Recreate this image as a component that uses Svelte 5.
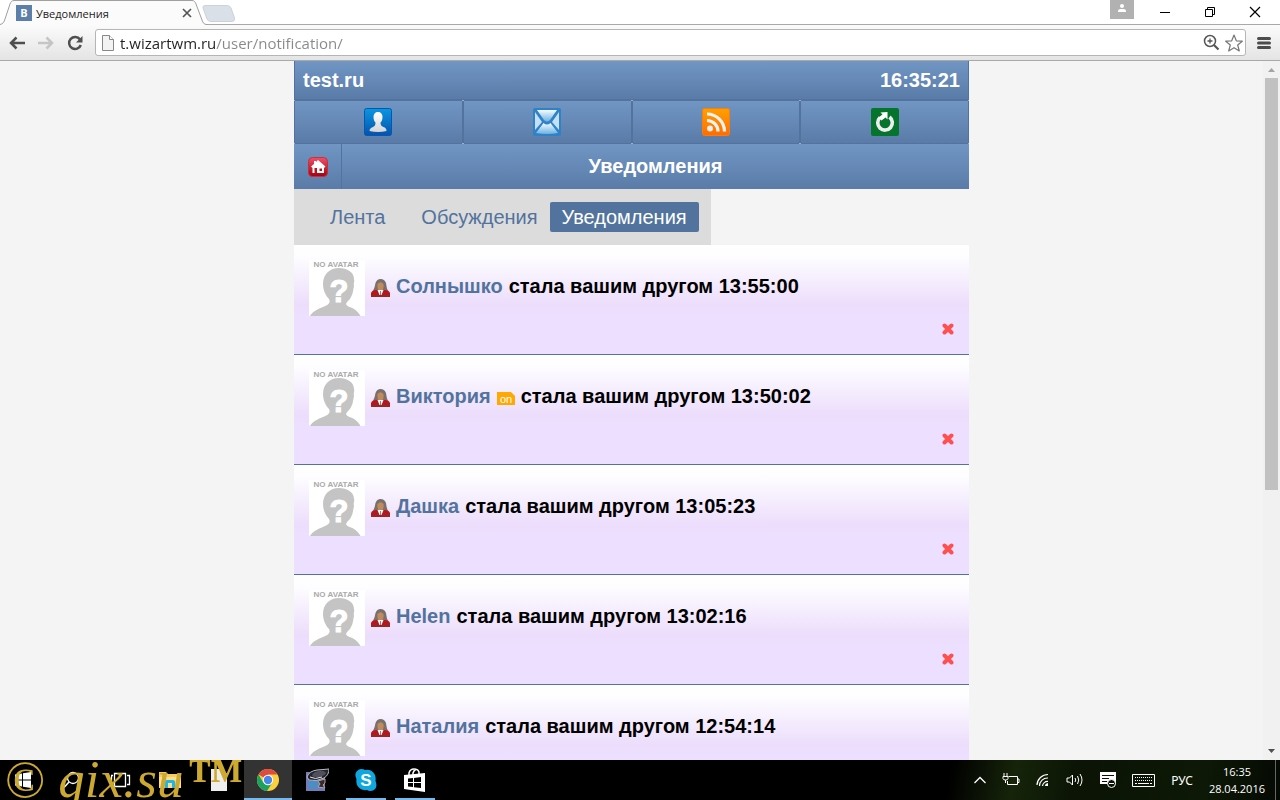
<script lang="ts">
  type Notice = { name: string; online: boolean; time: string };

  const notices: Notice[] = [
    { name: "Солнышко", online: false, time: "13:55:00" },
    { name: "Виктория", online: true, time: "13:50:02" },
    { name: "Дашка", online: false, time: "13:05:23" },
    { name: "Helen", online: false, time: "13:02:16" },
    { name: "Наталия", online: false, time: "12:54:14" },
  ];

  let address: string = $state("t.wizartwm.ru/user/notification/");
</script>

<svelte:head>
  <title>Уведомления</title>
</svelte:head>

<div class="screen">
  <header class="tabstrip">
    <div class="tab">
      <svg class="tab-shape" width="208" height="26" viewBox="0 0 208 26">
        <path
          d="M0 24.5C3 24 4 22 5 19L10 4C11 1.500 12 .5 14 .5H192C194 .5 195 1.500 196 4L202 20C203 23 204 24.500 207 24.500H208V26H0Z"
          fill="#fbfbfb"
        />
        <path
          d="M0 24.5C3 24 4 22 5 19L10 4C11 1.500 12 .5 14 .5H192C194 .5 195 1.500 196 4L202 20C203 23 204 24.500 207 24.500H208"
          fill="none"
          stroke="#a0a0a0"
        />
      </svg>
      <span class="favicon">B</span>
      <span class="tab-title">Уведомления</span>
      <button class="tab-close" aria-label="Закрыть вкладку">
        <svg width="10" height="10" viewBox="0 0 10 10">
          <path d="M1 1L9 9M9 1L1 9" stroke="#555" stroke-width="1.700" />
        </svg>
      </button>
    </div>
    <button class="new-tab" aria-label="Новая вкладка">
      <svg width="34" height="17" viewBox="0 0 34 17">
        <path
          d="M3 .5H25Q28 .5 29 3L32.500 13Q33 16.500 30 16.500H9Q6 16.500 5 14L1 3Q.5 .5 3 .5Z"
          fill="#dae0e8"
          stroke="#cdd2d9"
        />
      </svg>
    </button>
    <div class="window-buttons">
      <button class="profile" aria-label="Профиль">
        <svg width="24" height="19" viewBox="0 0 24 19">
          <circle cx="12" cy="6" r="2" fill="#fff" />
          <path d="M8 12V11Q8 9 10.500 9H13.500Q16 9 16 11V12Z" fill="#fff" />
        </svg>
      </button>
      <button aria-label="Свернуть">
        <svg width="12" height="12" viewBox="0 0 12 12">
          <path d="M1 6.500H11" stroke="#000" />
        </svg>
      </button>
      <button aria-label="Восстановить">
        <svg width="12" height="12" viewBox="0 0 12 12">
          <path d="M1.500 3.500H8.500V10.500H1.500ZM3.500 3.500V1.500H10.500V8.500H8.500" fill="none" stroke="#000" />
        </svg>
      </button>
      <button aria-label="Закрыть">
        <svg width="12" height="12" viewBox="0 0 12 12">
          <path d="M1 1L11 11M11 1L1 11" stroke="#000" stroke-width="1.200" />
        </svg>
      </button>
    </div>
  </header>

  <div class="toolbar">
    <button class="nav" aria-label="Назад">
      <svg width="18" height="18" viewBox="0 0 18 18">
        <path d="M17 9H3M8.500 3.500L3 9L8.500 14.500" fill="none" stroke="#4f4f4f" stroke-width="2.500" />
      </svg>
    </button>
    <button class="nav" aria-label="Вперёд">
      <svg width="18" height="18" viewBox="0 0 18 18">
        <path d="M1 9H15M9.500 3.500L15 9L9.500 14.500" fill="none" stroke="#c5c5c5" stroke-width="2.500" />
      </svg>
    </button>
    <button class="nav" aria-label="Обновить">
      <svg width="18" height="18" viewBox="0 0 18 18">
        <path d="M14 5.500A6 6 0 1 0 14.800 11" fill="none" stroke="#4f4f4f" stroke-width="2.500" />
        <path d="M16.500 2V8.500H10Z" fill="#4f4f4f" />
      </svg>
    </button>
    <div class="omnibox">
      <svg width="12" height="16" viewBox="0 0 12 16">
        <path d="M.5 .5H7.500L11.500 4.500V15.500H.5Z" fill="#f3f3f3" stroke="#888" />
        <path d="M7.500 .5V4.500H11.500" fill="#fff" stroke="#888" />
      </svg>
      <input class="address" type="text" aria-label="Адрес" bind:value={address} />
      <svg width="18" height="18" viewBox="0 0 18 18">
        <circle cx="7" cy="7" r="5.500" fill="none" stroke="#555" stroke-width="1.500" />
        <path d="M4.500 7H9.500M7 4.500V9.500" stroke="#555" stroke-width="1.300" />
        <path d="M11 11L15.500 15.500" stroke="#555" stroke-width="2.200" />
      </svg>
      <svg width="18" height="18" viewBox="0 0 18 18">
        <path
          d="M9 1L11.300 6.800L17.300 7.200L12.700 11L14.300 17L9 13.700L3.700 17L5.300 11L.7 7.200L6.700 6.800Z"
          fill="#fff"
          stroke="#777"
          stroke-width="1.200"
          stroke-linejoin="round"
        />
      </svg>
    </div>
    <button class="menu" aria-label="Меню">
      <svg width="14" height="14" viewBox="0 0 14 14">
        <path d="M1.500 2.500H12.500M1.500 7H12.500M1.500 11.500H12.500" stroke="#4c4c4c" stroke-width="3" stroke-linecap="round" />
      </svg>
    </button>
  </div>

  <div class="viewport">
    <main class="page">
      <div class="site-head">
        <a href="/">test.ru</a>
        <span>16:35:21</span>
      </div>

      <nav class="main-menu">
        <a href="/user/" aria-label="Профиль">
          <svg width="28" height="28" viewBox="0 0 28 28">
            <defs>
              <linearGradient id="blue" x2="0" y2="1">
                <stop stop-color="#0a97e0" />
                <stop offset="1" stop-color="#0552ae" />
              </linearGradient>
              <linearGradient id="silver" x2="0" y2="1">
                <stop stop-color="#fff" />
                <stop offset="1" stop-color="#d5d5d5" />
              </linearGradient>
            </defs>
            <rect x=".5" y=".5" width="27" height="27" rx="2" fill="url(#blue)" stroke="#0558ae" />
            <path
              d="M14 4C17 4 18.500 6 18.500 9C18.500 12 17.500 13.500 16.500 14.500C16.500 17 17 18 19.500 19C22 20 22.500 21 22.500 23Q14 25 5.500 23C5.500 21 6.500 20 9 19C11 18 11.500 17 11.500 14.500C10.500 13.500 9.500 12 9.500 9C9.500 6 11 4 14 4Z"
              fill="url(#silver)"
            />
          </svg>
        </a>
        <a href="/mail/" aria-label="Почта">
          <svg width="28" height="28" viewBox="0 0 28 28">
            <defs>
              <linearGradient id="mail" x2="0" y2="1">
                <stop stop-color="#f5fbff" />
                <stop offset="1" stop-color="#6bb3e4" />
              </linearGradient>
            </defs>
            <rect width="28" height="28" rx="2" fill="#3181c7" />
            <path d="M4 2H24L17 12Q14 15 11 12Z" fill="url(#mail)" />
            <path d="M2 4L9 14L2 22ZM26 4L19 14L26 22Z" fill="#c2e1f5" />
            <path d="M3 25L10.500 15Q14 18 17.500 15L25 25Q14 27 3 25Z" fill="url(#mail)" />
          </svg>
        </a>
        <a href="/feed/" aria-label="Лента">
          <svg width="28" height="28" viewBox="0 0 28 28">
            <defs>
              <linearGradient id="orange" x2="0" y2="1">
                <stop stop-color="#ffa100" />
                <stop offset="1" stop-color="#ff6c00" />
              </linearGradient>
            </defs>
            <rect x=".5" y=".5" width="27" height="27" rx="2" fill="url(#orange)" stroke="#ff7b0b" />
            <circle cx="8" cy="20.500" r="3" fill="#eee" />
            <path d="M5 12.500A11 11 0 0 1 16 23.500M5 6A17.500 17.500 0 0 1 22.500 23.500" fill="none" stroke="#f3f3f3" stroke-width="3.200" />
          </svg>
        </a>
        <a href="/user/notification/" aria-label="Обновить">
          <svg width="28" height="28" viewBox="0 0 28 28">
            <rect width="28" height="28" rx="2" fill="#05742c" />
            <path d="M9 9.500A7.300 7.300 0 1 0 18.500 9" fill="none" stroke="#eee" stroke-width="3.600" />
            <path d="M9.500 4.500L16.500 4V11.500L14.500 9.500L10.500 12.500L7.500 9.500L11.500 6.500Z" fill="#fff" />
          </svg>
        </a>
      </nav>

      <div class="title-bar">
        <a class="home" href="/" aria-label="Главная">
          <svg width="20" height="20" viewBox="0 0 20 20">
            <defs>
              <linearGradient id="red" x2="0" y2="1">
                <stop stop-color="#f0506a" />
                <stop offset="1" stop-color="#a4000c" />
              </linearGradient>
            </defs>
            <rect x=".5" y=".5" width="19" height="19" rx="4" fill="url(#red)" stroke="#c4303c" />
            <path d="M10 3L17.500 9.500L16 11V16H4.500V11L3 9.500L6 7V4H8V5Z" fill="#fff" />
            <path d="M6.500 11H9V16H6.500ZM11.500 11.500H14V14H11.500Z" fill="#b51420" />
          </svg>
        </a>
        <h1>Уведомления</h1>
      </div>

      <nav class="sections">
        <a class="feed" href="/user/feed/">Лента</a>
        <a href="/user/discussions/">Обсуждения</a>
        <a class="active" href="/user/notification/">Уведомления</a>
      </nav>

      {#each notices as notice}
        <article class="notice">
          <svg class="avatar" width="56" height="56" viewBox="0 0 56 56">
            <rect width="56" height="56" fill="#fff" />
            <text x="27" y="7" text-anchor="middle" class="no-avatar">NO AVATAR</text>
            <path
              d="M30 8C38 8 45 12 45 19C46 21 44 23 45 26C44 30 44 34 42 37C41 40 38 41 37 44C38 47 42 47 45 49C48 51 50 53 51.500 56H1C4 51 9 49 14 47C19 45 22 43 20 39C16 35 14 29 14 24C14 14 21 8 30 8Z"
              fill="#c4c4c4"
            />
            <text x="30" y="42" text-anchor="middle" class="question">?</text>
          </svg>
          <div class="message">
            <svg width="19" height="18" viewBox="0 0 19 18">
              <path d="M2 12Q4 8 4.500 4Q6 0 9.500 0Q13.500 0 15 4Q15.500 9 17 12L13 14H6Z" fill="#77706c" />
              <path d="M6.500 5Q9.500 1.500 12.500 5Q13.500 10 9.500 13Q5.500 10 6.500 5Z" fill="#c08a5c" />
              <path d="M0 17.500V14Q1 11 5 11H14Q18 11 19 14V17.500Z" fill="#b4181c" />
              <path d="M0 16H19V18H0Z" fill="#8f2a2a" />
              <path d="M6.500 11H12.500L10.500 16H8.500Z" fill="#fff" />
              <path d="M9.500 12V16" stroke="#c66" />
            </svg>
            <a href="/user/">{notice.name}</a>
            {#if notice.online}
              <svg width="18" height="14" viewBox="0 0 18 14">
                <path d="M0 1H14L18 5V14H0Z" fill="#ffa800" />
                <text x="9" y="12" text-anchor="middle" class="online">on</text>
              </svg>
            {/if}
            <span>стала вашим другом {notice.time}</span>
          </div>
          <button class="delete" aria-label="Удалить">
            <svg width="12" height="12" viewBox="0 0 12 12">
              <path d="M2.500 2.500L9.500 9.500M9.500 2.500L2.500 9.500" stroke="#ff5050" stroke-width="4" stroke-linecap="round" />
            </svg>
          </button>
        </article>
      {/each}
    </main>

    <div class="scrollbar">
      <svg width="17" height="17" viewBox="0 0 17 17">
        <path d="M5 11L8.500 7L12 11Z" fill="#a3a3a3" />
      </svg>
      <div class="track"><div class="thumb"></div></div>
      <svg width="17" height="17" viewBox="0 0 17 17">
        <path d="M5 6L8.500 10L12 6Z" fill="#505050" />
      </svg>
    </div>
  </div>

  <footer class="taskbar">
    <div class="apps">
      <button aria-label="Пуск">
        <svg width="16" height="16" viewBox="0 0 16 16">
          <path d="M0 2.500L7 1.500V7.500H0ZM8 1.300L16 0V7.500H8ZM0 8.500H7V14.500L0 13.500ZM8 8.500H16V16L8 14.700Z" fill="#fff" />
        </svg>
      </button>
      <button aria-label="Поиск">
        <svg width="18" height="18" viewBox="0 0 18 18">
          <circle cx="10" cy="7" r="5.500" fill="none" stroke="#fff" stroke-width="1.300" />
          <path d="M6 11L1 16.500" stroke="#fff" stroke-width="1.500" />
        </svg>
      </button>
      <button aria-label="Представление задач">
        <svg width="20" height="16" viewBox="0 0 20 16">
          <path d="M3.500 1.500H14.500V14.500H3.500ZM2 3.500H.5V12.500H2M16 3.500H18.500V12.500H16" fill="none" stroke="#fff" stroke-width="1.300" />
        </svg>
      </button>
      <button aria-label="Проводник">
        <svg width="22" height="18" viewBox="0 0 22 18">
          <path d="M0 1H7L9 3H20V17H0Z" fill="#f3ce5e" />
          <path d="M0 6H22V17H0Z" fill="#fbe08a" />
          <path d="M6 17V11Q6 9 8 9H14Q16 9 16 11V17H13V12H9V17Z" fill="#22b3ea" />
        </svg>
      </button>
      <button aria-label="Документ">
        <svg width="16" height="22" viewBox="0 0 16 22">
          <path d="M0 0H11L16 5V22H0Z" fill="#eee" />
          <path d="M11 0V5H16Z" fill="#bbb" />
        </svg>
      </button>
      <button class="current" aria-label="Chrome">
        <svg width="22" height="22" viewBox="0 0 22 22">
          <circle cx="11" cy="11" r="11" fill="#fbd03f" />
          <path d="M11 11L1.500 5.500A11 11 0 0 1 20.500 5.500H11Z" fill="#df4b3f" />
          <path d="M1.500 5.500A11 11 0 0 0 10 22L15.500 13.500H11L6.300 13.500Z" fill="#1aa260" />
          <circle cx="11" cy="11" r="5.200" fill="#fff" />
          <circle cx="11" cy="11" r="4.200" fill="#4a86e8" />
        </svg>
      </button>
      <button aria-label="Плеер">
        <svg width="24" height="24" viewBox="0 0 24 24">
          <path d="M1 4H20V23H1Z" fill="#7c78b8" />
          <path d="M3 12L18 9V21H3Z" fill="#4d8dc4" />
          <path d="M2 9Q4 3 12 2L24 1Q24 7 19 10Q11 14 4 12Z" fill="#25252b" stroke="#b9b9c7" />
          <ellipse cx="14" cy="6" rx="7" ry="3" fill="#50505c" transform="rotate(-12 14 6)" />
          <path d="M5 9Q10 12 17 9" fill="none" stroke="#e4e4ee" />
          <path d="M13 13L20 11V15L18 17L20 20L13 19L15 16Z" fill="#382b2e" stroke="#b89ea3" />
        </svg>
      </button>
      <button class="running" aria-label="Skype">
        <svg width="22" height="22" viewBox="0 0 22 22">
          <path d="M6 0Q9 0 10 1Q17 0 20 6Q21 9 20.500 12Q23 18 19 21Q15 23 12 21Q5 22 2 16Q1 13 1.500 10Q-1 5 2 2Q4 0 6 0Z" fill="#0ea7e0" />
          <text x="11" y="17" text-anchor="middle" class="skype">S</text>
        </svg>
      </button>
      <button class="running" aria-label="Магазин">
        <svg width="22" height="24" viewBox="0 0 22 24">
          <path d="M0 7L21 5V24L0 21Z" fill="#fff" />
          <path d="M5 9V5Q6 1 10 1Q14 1 15 4V7M9 8V5Q11 0 14 2" fill="none" stroke="#fff" stroke-width="1.500" />
          <path d="M4 10.500L9 10V14H4ZM10 10L17 9V14H10ZM4 15H9V19L4 18.500ZM10 15H17V20L10 19.200Z" fill="#000" />
        </svg>
      </button>
    </div>

    <div class="tray">
      <svg width="12" height="8" viewBox="0 0 12 8">
        <path d="M.5 7L6 1.500L11.500 7" fill="none" stroke="#fff" stroke-width="1.300" />
      </svg>
      <svg width="18" height="14" viewBox="0 0 18 14">
        <path d="M6.500 3.500H15.500V11.500H5.500V8M15.500 6H17V9.500H15.500M2 0V3M5 0V3M1 3.500H6V5.500Q6 7 3.500 7Q1 7 1 5.500ZM3.500 7V10" fill="none" stroke="#fff" />
      </svg>
      <svg width="14" height="14" viewBox="0 0 14 14">
        <path d="M1 12A11 11 0 0 1 12 1.500M3.500 13A8 8 0 0 1 12 5M6.500 13A5 5 0 0 1 12 8.500" fill="none" stroke="#fff" stroke-width="1.200" />
        <path d="M12 10V13H9Q9 10.500 12 10Z" fill="#fff" />
      </svg>
      <svg width="18" height="14" viewBox="0 0 18 14">
        <path d="M1 5H3.500L6.500 2V12L3.500 9H1ZM9 5Q10.500 7 9 9M11.500 3Q14 7 11.500 11M14 1Q18 7 14 13" fill="none" stroke="#fff" />
      </svg>
      <svg width="16" height="16" viewBox="0 0 16 16">
        <path d="M0 0H16V12H0Z" fill="#fff" />
        <path d="M2 3.500H14M2 6.500H9M2 9.500H7" stroke="#0a1206" />
        <circle cx="11.500" cy="11.500" r="4" fill="#0a1206" stroke="#fff" />
        <path d="M9 11.500H14" stroke="#fff" />
      </svg>
      <svg width="23" height="13" viewBox="0 0 23 13">
        <path d="M.5 .5H22.500V12.500H.5Z" fill="none" stroke="#fff" />
        <path d="M3 3.500H20M3 6.500H20" stroke="#fff" stroke-dasharray="1 1" />
        <path d="M3 9.500H5M6 9.500H17M18 9.500H20" stroke="#fff" />
      </svg>
      <span class="lang">РУС</span>
      <div class="clock">
        <span>16:35</span>
        <span>28.04.2016</span>
      </div>
      <div class="show-desktop"></div>
    </div>

    <div class="watermark">
      <span>©</span>
      <i>gix.su</i>
      <span class="mark">™</span>
    </div>
  </footer>
</div>

<style>
  :global(body) {
    background: #f4f4f4;
  }

  .screen {
    height: 100vh;
    display: flex;
    flex-direction: column;
    overflow: hidden;
    font-family: "Noto Sans", "Open Sans", sans-serif;
  }

  button {
    border: 0;
    padding: 0;
    background: none;
    display: flex;
    align-items: center;
    justify-content: center;
  }

  svg {
    display: block;
    flex: none;
  }

  a {
    text-decoration: none;
  }

  .tabstrip {
    height: 25px;
    flex: none;
    display: flex;
    background: #fff;
    border-bottom: 1px solid #a9a9a9;
    box-sizing: border-box;
  }

  .tab {
    position: relative;
    width: 208px;
    box-sizing: border-box;
    padding: 2px 16px 0;
    display: flex;
    align-items: center;
    gap: 4px;
  }

  .tab-shape {
    position: absolute;
    left: 0;
    top: 0;
  }

  .favicon {
    position: relative;
    width: 16px;
    height: 16px;
    background: #5b7fa8;
    color: #fff;
    font: bold 11px/16px "Open Sans", sans-serif;
    text-align: center;
  }

  .tab-title {
    position: relative;
    flex: 1;
    color: #222;
    font-family: "Open Sans", sans-serif;
    font-size: 11px;
  }

  .tab-close {
    position: relative;
  }

  .new-tab {
    position: relative;
    margin-left: -6px;
    padding-top: 2px;
  }

  .window-buttons {
    flex: 1;
    display: flex;
    justify-content: flex-end;
  }

  .window-buttons button {
    width: 45px;
  }

  .window-buttons .profile {
    width: 24px;
    height: 19px;
    background: #b1b1b1;
    margin-right: 8px;
  }

  .window-buttons button:last-child {
    margin-right: 3px;
  }

  .toolbar {
    height: 36px;
    flex: none;
    box-sizing: border-box;
    display: flex;
    align-items: center;
    gap: 11px;
    padding: 0 9px 0 8px;
    background: linear-gradient(#fbfbfb, #e4e4e4);
    border-bottom: 1px solid #a9a9a9;
  }

  .omnibox {
    flex: 1;
    height: 27px;
    box-sizing: border-box;
    display: flex;
    align-items: center;
    gap: 4px;
    padding: 0 2px 0 6px;
    background: #fff;
    border: 1px solid #b5b5b5;
    border-radius: 3px;
  }

  .address {
    flex: 1;
    min-width: 0;
    border: 0;
    padding: 0 0 0 2px;
    outline: none;
    font-family: "Open Sans", sans-serif;
    font-size: 15px;
    line-height: 24px;
    color: transparent;
    caret-color: #222;
    background: linear-gradient(90deg, #222 98px, #888 98px);
    background-clip: text;
  }

  .viewport {
    flex: 1;
    min-height: 0;
    display: flex;
    overflow: hidden;
    background: #f4f4f4;
  }

  .page {
    width: 100%;
    max-width: 675px;
    margin: 0 auto;
    font-family: "Liberation Sans", Arial, sans-serif;
    font-size: 20px;
  }

  .site-head,
  .main-menu a,
  .title-bar {
    background: linear-gradient(#7196c4, #5a7ba8);
  }

  .site-head {
    height: 39px;
    box-sizing: border-box;
    display: flex;
    justify-content: space-between;
    align-items: center;
    padding: 0 8px;
    border: 1px solid #52739d;
    border-top: 0;
    color: #fff;
    font-weight: bold;
  }

  .site-head a {
    color: #fff;
  }

  .main-menu {
    display: grid;
    grid-template-columns: repeat(4, 1fr);
  }

  .main-menu a {
    display: flex;
    justify-content: center;
    padding: 7px 0;
    border: 1px solid #52739d;
    border-radius: 1px;
  }

  .title-bar {
    height: 45px;
    display: flex;
    align-items: stretch;
    color: #fff;
  }

  .home {
    width: 47px;
    display: flex;
    align-items: center;
    justify-content: center;
    border-right: 1px solid #52739d;
  }

  h1 {
    flex: 1;
    margin: 0;
    font-size: 20px;
    line-height: 45px;
    text-align: center;
  }

  .sections {
    width: fit-content;
    display: flex;
    padding: 13px 12px 13px 24px;
    background: #dcdcdc;
  }

  .sections a {
    padding: 0 12px;
    line-height: 30px;
    color: #52739d;
    border-radius: 2px;
  }

  .sections .feed {
    margin-right: 12px;
  }

  .sections .active {
    background: #52739d;
    color: #fff;
  }

  .notice {
    display: grid;
    grid-template-columns: 56px 1fr;
    column-gap: 6px;
    padding: 15px 15px 12px;
    border-bottom: 1px solid #52739d;
    background: linear-gradient(#fff 0%, #fdfcff 12%, #ecddfc 55%, #eddfff 65%);
  }

  .message {
    display: flex;
    align-items: center;
    gap: 6px;
    padding-bottom: 4px;
    font-weight: bold;
    color: #000;
  }

  .message svg {
    margin-top: 4px;
  }

  .message a {
    color: #52739d;
  }

  .no-avatar {
    font: bold 8px "Liberation Sans", sans-serif;
    fill: #aaa;
  }

  .question {
    font: bold 31px "Liberation Sans", sans-serif;
    fill: #fff;
    stroke: #fff;
  }

  .online {
    font: 11px "Liberation Sans", sans-serif;
    fill: #fff;
  }

  .delete {
    grid-column: 2;
    justify-self: end;
    height: 26px;
  }

  .scrollbar {
    width: 17px;
    flex: none;
    display: flex;
    flex-direction: column;
    background: #f1f1f1;
  }

  .track {
    flex: 1;
    padding: 0 2px;
  }

  .thumb {
    height: 62%;
    background: #c1c1c1;
  }

  .taskbar {
    position: relative;
    height: 40px;
    flex: none;
    display: flex;
    justify-content: space-between;
    background: linear-gradient(100deg, #000 74%, #16240a 79%, #0b1405 84%, #0d1806 94%, #050903);
  }

  .apps {
    display: flex;
    gap: 1px;
    margin-left: -1px;
  }

  .apps button {
    width: 48px;
  }

  .apps .current {
    background: #333;
    box-shadow: inset 0 -2px #76b9ed;
  }

  .apps .running {
    background: linear-gradient(#76b9ed, #76b9ed) bottom / 40px 2px no-repeat;
  }

  .skype {
    font: bold 17px "Liberation Sans", sans-serif;
    fill: #fff;
  }

  .tray {
    display: flex;
    align-items: center;
    gap: 16px;
    color: #fff;
    font-size: 12px;
  }

  .clock {
    display: flex;
    flex-direction: column;
    text-align: center;
    line-height: 17px;
    font-family: "Open Sans", sans-serif;
    font-size: 11px;
  }

  .show-desktop {
    width: 4px;
    margin-left: -6px;
    align-self: stretch;
    border-left: 1px solid #666;
  }

  .watermark {
    position: absolute;
    left: 5px;
    bottom: 0;
    display: flex;
    align-items: baseline;
    gap: 13px;
    color: #cdaa2f;
    font: 53px/42px "Liberation Serif", serif;
    white-space: nowrap;
    pointer-events: none;
  }

  .watermark .mark {
    margin-left: -9px;
    font-size: 56px;
    font-weight: bold;
  }
</style>
